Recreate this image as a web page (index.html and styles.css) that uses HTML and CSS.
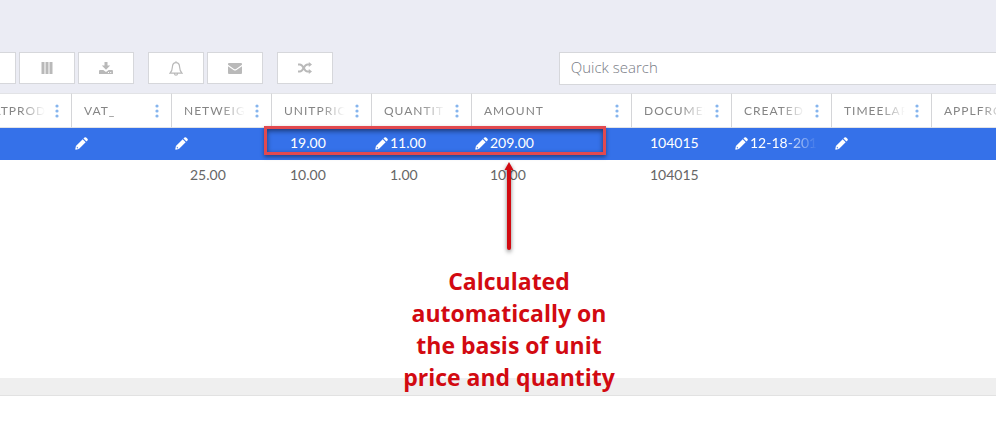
FILE: index.html
```
<!DOCTYPE html>
<html lang="en">
<head>
<meta charset="UTF-8">
<meta name="viewport" content="width=device-width, initial-scale=1">
<title>Sales lines</title>
<link rel="stylesheet" href="styles.css">
</head>
<body>
<!-- shared icons -->
<svg class="sprite" aria-hidden="true">
  <symbol id="pencil" viewBox="0 0 14 14">
    <path d="M8.300 2.500 11.500 5.700 4.200 13 .8 13.700.3 13.200 1 9.800zM9.100 1.700 10.200.6a1.300 1.300 0 0 1 1.800 0L13.400 2a1.300 1.300 0 0 1 0 1.800L12.300 4.900z"/>
    <path class="pencil-tip" d="M2 10.300l1.700 1.700-1 .3-.9-.9z"/>
  </symbol>
  <symbol id="dots" viewBox="0 0 4 14">
    <circle cx="2" cy="2" r="1.600"/><circle cx="2" cy="7" r="1.600"/><circle cx="2" cy="12" r="1.600"/>
  </symbol>
</svg>
<div class="page">
  <div class="toolbar">
    <div class="group">
      <button class="tool" type="button" aria-label="Refresh"></button>
      <button class="tool" type="button" aria-label="Columns">
        <svg width="12" height="12" viewBox="0 0 12 12"><path d="M1 0h2v12H1zM5 0h2v12H5zM9 0h2v12H9z"/><path opacity=".5" d="M0 0h12v12H0z"/></svg>
      </button>
      <button class="tool" type="button" aria-label="Download">
        <svg width="14" height="12" viewBox="0 0 14 12"><path d="M5.500 0h3v3.500h2.700L7 7.800 2.800 3.500h2.700z"/><path fill-rule="evenodd" d="M.7 8h3.600L7 10l2.700-2h3.600l.7.700V12H0V8.700zM9 10v1h1v-1zm2.200 0v1h1v-1z"/></svg>
      </button>
    </div>
    <div class="group">
      <button class="tool" type="button" aria-label="Notifications">
        <svg width="14" height="15" viewBox="0 0 14 15"><path class="line" d="M7 1.600C4.500 1.600 3.500 3.400 3.400 6 3.300 9 2.500 10.800 1 12.200h12c-1.500-1.400-2.300-3.200-2.400-6.200C10.500 3.400 9.500 1.600 7 1.600zM7 .2v1.400M5.500 12.700c.1 1.900 2.900 1.900 3 0"/></svg>
      </button>
      <button class="tool" type="button" aria-label="Mail">
        <svg width="14" height="11" viewBox="0 0 14 11"><path d="M0 1a1 1 0 0 1 1-1h12a1 1 0 0 1 1 1v.8L8 5.900q-1 .7-2 0L0 1.800zM0 3.300 5.500 7.100q1.500 1 3 0L14 3.300V10a1 1 0 0 1-1 1H1a1 1 0 0 1-1-1z"/></svg>
      </button>
    </div>
    <div class="group">
      <button class="tool" type="button" aria-label="Shuffle">
        <svg width="14" height="12" viewBox="0 0 14 12"><path class="thick" d="M0 2.500h1.800C5.800 2.500 5.500 9.500 9.500 9.500H11M0 9.500h1.800C5.800 9.500 5.500 2.500 9.500 2.500H11"/><path d="M10.800 0 14 2.500 10.800 5zM10.800 7 14 9.500 10.800 12z"/></svg>
      </button>
    </div>
    <input class="search" type="text" placeholder="Quick search" aria-label="Quick search">
  </div>

  <div class="grid">
    <table>
      <colgroup>
        <col class="col"><col class="col"><col class="col"><col class="col"><col class="col">
        <col class="col-wide"><col class="col"><col class="col"><col class="col"><col>
      </colgroup>
      <thead>
        <tr>
          <th><div class="head"><span>VATPROD</span><button type="button" aria-label="Column menu"><svg><use href="#dots"/></svg></button></div></th>
          <th><div class="head"><span>VAT_</span><button type="button" aria-label="Column menu"><svg><use href="#dots"/></svg></button></div></th>
          <th><div class="head"><span>NETWEIG</span><button type="button" aria-label="Column menu"><svg><use href="#dots"/></svg></button></div></th>
          <th><div class="head"><span>UNITPRIC</span><button type="button" aria-label="Column menu"><svg><use href="#dots"/></svg></button></div></th>
          <th><div class="head"><span>QUANTIT</span><button type="button" aria-label="Column menu"><svg><use href="#dots"/></svg></button></div></th>
          <th><div class="head"><span>AMOUNT</span><button type="button" aria-label="Column menu"><svg><use href="#dots"/></svg></button></div></th>
          <th><div class="head"><span>DOCUMEN</span><button type="button" aria-label="Column menu"><svg><use href="#dots"/></svg></button></div></th>
          <th><div class="head"><span>CREATED</span><button type="button" aria-label="Column menu"><svg><use href="#dots"/></svg></button></div></th>
          <th><div class="head"><span>TIMEELAP</span><button type="button" aria-label="Column menu"><svg><use href="#dots"/></svg></button></div></th>
          <th><div class="head"><span>APPLFROM</span><button type="button" aria-label="Column menu"><svg><use href="#dots"/></svg></button></div></th>
        </tr>
      </thead>
      <tbody>
        <tr class="selected">
          <td></td>
          <td><div class="cell"><svg><use href="#pencil"/></svg></div></td>
          <td><div class="cell"><svg><use href="#pencil"/></svg></div></td>
          <td><div class="cell plain">19.00</div></td>
          <td><div class="cell"><svg><use href="#pencil"/></svg>11.00</div></td>
          <td><div class="cell"><svg><use href="#pencil"/></svg>209.00</div></td>
          <td><div class="cell plain">104015</div></td>
          <td><div class="cell fade"><svg><use href="#pencil"/></svg>12-18-2019</div></td>
          <td><div class="cell"><svg><use href="#pencil"/></svg></div></td>
          <td></td>
        </tr>
        <tr>
          <td></td>
          <td></td>
          <td><div class="cell plain">25.00</div></td>
          <td><div class="cell plain">10.00</div></td>
          <td><div class="cell plain">1.00</div></td>
          <td><div class="cell plain">10.00</div></td>
          <td><div class="cell plain">104015</div></td>
          <td></td>
          <td></td>
          <td></td>
        </tr>
      </tbody>
    </table>
    <!-- callout over the grid -->
    <div class="highlight"></div>
    <div class="callout">
      <svg class="arrow" width="20" height="96" viewBox="0 0 20 96"><path class="shaft" d="M10 8v78"/><path d="M10 0l4.500 8h-9z"/></svg>
      <p>Calculated automatically on the basis of unit price and quantity</p>
    </div>
  </div>
  <div class="scrollbar"></div>
  <div class="footer"></div>
</div>
</body>
</html>
```
FILE: styles.css
```
* {
  box-sizing: border-box;
}
body {
  margin: 0;
  background-color: #fff;
  color: #666;
  font-family: Lato, sans-serif;
  font-size: 14px;
}
.sprite {
  position: absolute;
  width: 0;
  height: 0;
}
.page {
  display: flex;
  flex-direction: column;
  min-height: 100vh;
  overflow: hidden;
}

/* Toolbar */
.toolbar {
  display: flex;
  gap: 14px;
  margin-left: -40px;
  padding: 52px 0 8px;
  background-color: #ebecf4;
}
.group {
  display: flex;
  gap: 3px;
}
.tool {
  display: flex;
  align-items: center;
  justify-content: center;
  width: 56px;
  height: 32px;
  padding: 0;
  border: 1px solid #d6d7db;
  background-color: #fff;
  cursor: pointer;
}
.tool svg {
  fill: #b9b9b9;
}
.tool .line,
.tool .thick {
  fill: none;
  stroke: #b9b9b9;
  stroke-width: 1.2;
}
.tool .thick {
  stroke-width: 2;
}
.search {
  width: 44vw;
  height: 33px;
  margin-left: auto;
  margin-right: -1px;
  padding: 0 11px 4px;
  border: 1px solid #d6d7db;
  border-radius: 0;
  background-color: #fff;
  color: #555;
  font-family: "Open Sans", sans-serif;
  font-size: 15px;
  font-weight: 300;
}
.search::placeholder {
  color: #777b84;
  opacity: 1;
}

/* Grid */
.grid {
  position: relative;
  flex: 1;
}
table {
  width: calc(100% + 28px);
  min-width: 1060px;
  margin-left: -28px;
  border-collapse: separate;
  border-spacing: 0;
  table-layout: fixed;
}
.col {
  width: 100px;
}
.col-wide {
  width: 160px;
}
th {
  height: 35px;
  padding: 0;
  border-top: 1px solid #e2e3e6;
  border-right: 1px solid #d4d5d8;
  border-bottom: 1px solid #e2e3e6;
  color: #858585;
  font-size: 12px;
  font-weight: 400;
  text-align: left;
}
.head {
  display: flex;
  align-items: center;
  padding: 0 12px;
}
.head span {
  flex: 1;
  overflow: hidden;
  letter-spacing: 1px;
  line-height: 16px;
  white-space: nowrap;
  mask-image: linear-gradient(to left, transparent, #000 24px);
}
.head button {
  display: flex;
  margin-left: 10px;
  padding: 0;
  border: 0;
  background: none;
  cursor: pointer;
}
.head svg {
  width: 4px;
  height: 14px;
  fill: #86b5ee;
}
td {
  height: 32px;
  padding: 0 0 2px;
}
.cell {
  display: flex;
  align-items: center;
  gap: 2px;
  margin-right: 15px;
  padding-left: 3px;
  overflow: hidden;
  line-height: 20px;
  white-space: nowrap;
}
.cell.plain {
  padding-left: 18px;
}
.cell.fade {
  mask-image: linear-gradient(to left, transparent, #000 32px);
}
.cell svg {
  flex: none;
  width: 13px;
  height: 13px;
  fill: #fff;
}
.pencil-tip {
  fill: #3571e9;
}
.selected td {
  background-color: #3571e9;
  color: #fff;
}

/* Callout */
.highlight {
  position: absolute;
  top: 33px;
  left: 264px;
  width: 342px;
  height: 29px;
  border: 3px solid #e2494f;
  box-shadow: 0 2px 4px rgba(0, 0, 0, .4), inset 0 2px 5px rgba(0, 0, 0, .5);
}
.callout {
  position: absolute;
  top: 69px;
  left: 398px;
  display: flex;
  flex-direction: column;
  align-items: center;
  width: 222px;
}
.callout p {
  margin: 7px 0 0;
  color: #d20a11;
  font-family: "Open Sans", sans-serif;
  font-size: 23px;
  font-weight: 700;
  line-height: 32px;
  text-align: center;
}
.arrow {
  fill: #d20a11;
  filter: drop-shadow(0 2px 2px rgba(0, 0, 0, .5));
}
.shaft {
  stroke: #d20a11;
  stroke-width: 4;
  stroke-linecap: round;
}

/* Bottom */
.scrollbar {
  height: 18px;
  border-bottom: 1px solid #e2e2e2;
  background-color: #efefef;
}
.footer {
  height: 45px;
}
.scrollbar,
.footer {
  flex: none;
}
.callout,
.highlight {
  pointer-events: none;
}
```
